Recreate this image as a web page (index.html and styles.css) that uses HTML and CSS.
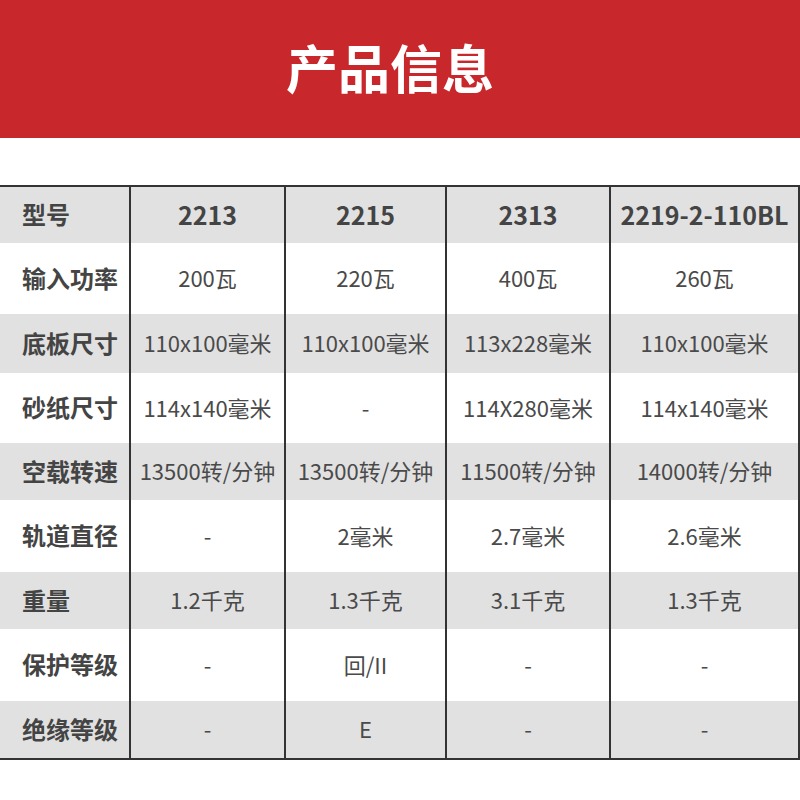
FILE: index.html
```html
<!DOCTYPE html>
<html lang="zh">
<head>
<meta charset="utf-8">
<title>产品信息</title>
<link rel="stylesheet" href="styles.css">
</head>
<body>
<header class="banner"><h1 class="title">产品信息</h1></header>
<div class="table">
  <div class="row gray r1"><div class="cell label">型号</div><div class="cell head">2213</div><div class="cell head">2215</div><div class="cell head">2313</div><div class="cell head">2219-2-110BL</div></div>
  <div class="row r2"><div class="cell label">输入功率</div><div class="cell">200瓦</div><div class="cell">220瓦</div><div class="cell">400瓦</div><div class="cell">260瓦</div></div>
  <div class="row gray r3"><div class="cell label">底板尺寸</div><div class="cell">110x100毫米</div><div class="cell">110x100毫米</div><div class="cell">113x228毫米</div><div class="cell">110x100毫米</div></div>
  <div class="row r4"><div class="cell label">砂纸尺寸</div><div class="cell">114x140毫米</div><div class="cell">-</div><div class="cell">114X280毫米</div><div class="cell">114x140毫米</div></div>
  <div class="row gray r5"><div class="cell label">空载转速</div><div class="cell">13500转/分钟</div><div class="cell">13500转/分钟</div><div class="cell">11500转/分钟</div><div class="cell">14000转/分钟</div></div>
  <div class="row r6"><div class="cell label">轨道直径</div><div class="cell">-</div><div class="cell">2毫米</div><div class="cell">2.7毫米</div><div class="cell">2.6毫米</div></div>
  <div class="row gray r7"><div class="cell label">重量</div><div class="cell">1.2千克</div><div class="cell">1.3千克</div><div class="cell">3.1千克</div><div class="cell">1.3千克</div></div>
  <div class="row r8"><div class="cell label">保护等级</div><div class="cell">-</div><div class="cell">回/II</div><div class="cell">-</div><div class="cell">-</div></div>
  <div class="row gray r9"><div class="cell label">绝缘等级</div><div class="cell">-</div><div class="cell">E</div><div class="cell">-</div><div class="cell">-</div></div>
</div>
</body>
</html>
```
FILE: styles.css
```css
html, body {
  margin: 0;
  padding: 0;
  background: #ffffff;
  font-family: "Noto Sans CJK SC", "Noto Sans", sans-serif;
}
.banner {
  height: 138px;
  background: #c8282b;
  display: flex;
  align-items: center;
  justify-content: center;
  padding-right: 20px;
  padding-bottom: 4px;
  box-sizing: border-box;
}
.title {
  margin: 0;
  color: #ffffff;
  font-size: 52px;
  font-weight: 700;
  letter-spacing: 0;
  line-height: 1;
}
.table {
  margin-top: 47px;
  border-top: 2px solid #333333;
  border-bottom: 2px solid #333333;
  border-right: 2px solid #333333;
  width: 800px;
  box-sizing: border-box;
}
.row {
  display: grid;
  grid-template-columns: 129px 155px 161px 164px 189px;
  background: #ffffff;
}
.row.gray { background: #e1e1e1; }
.r1 { height: 56px; }
.r2 { height: 71px; }
.r3 { height: 59px; }
.r4 { height: 70px; }
.r5 { height: 57px; }
.r6 { height: 72px; }
.r7 { height: 57px; }
.r8 { height: 72px; }
.r9 { height: 57px; }
.cell {
  box-sizing: border-box;
  border-left: 2px solid #333333;
  display: flex;
  align-items: center;
  justify-content: center;
  padding-bottom: 3px;
  color: #4a4a4a;
  font-size: 22px;
  white-space: nowrap;
}
.cell.label {
  border-left: none;
  justify-content: flex-start;
  padding-left: 22px;
  font-size: 24px;
  font-weight: 700;
  color: #444444;
}
.cell.head {
  font-size: 25px;
  font-weight: 700;
  color: #444444;
}
```
